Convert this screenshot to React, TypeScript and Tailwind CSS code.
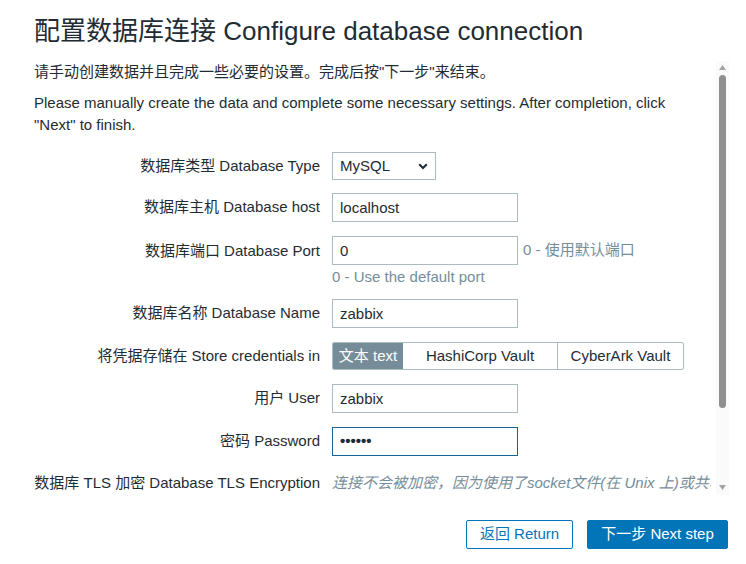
import React from "react";

const labelCls = "w-[286px] shrink-0 text-right whitespace-nowrap";
const inputCls =
  "h-[29px] w-[186px] border border-[#acbbc2] bg-white px-[7px] text-[15px] text-[#1f2c33] outline-none font-['Liberation_Sans','Noto_Sans_CJK_SC',sans-serif]";

function Row({ label, children, className = "" }: { label: string; children: React.ReactNode; className?: string }) {
  return (
    <div className={"flex items-center gap-[12px] " + className}>
      <div className={labelCls}>{label}</div>
      {children}
    </div>
  );
}

export default function App() {
  return (
    <div className="w-[746px] h-[564px] bg-white overflow-hidden text-[#1f2c33] text-[15px] font-['Liberation_Sans','Noto_Sans_CJK_SC',sans-serif]">
      <h1 className="pl-[34px] pt-[16px] text-[26px] leading-[30px] font-normal whitespace-nowrap">
        配置数据库连接 Configure database connection
      </h1>
      <div className="ml-[34px] mt-[15px] flex h-[434px] w-[695px]">
        <div className="mr-[5px] flex-1 overflow-hidden">
          <p className="leading-[22px] whitespace-nowrap">请手动创建数据并且完成一些必要的设置。完成后按"下一步"来结束。</p>
          <p className="mt-[9px] leading-[22px] w-[660px]">
            Please manually create the data and complete some necessary settings. After completion, click "Next" to finish.
          </p>
          <div className="mt-[16px] flex flex-col">
            <Row label="数据库类型 Database Type">
              <div className="flex h-[28px] w-[104px] items-center justify-between border border-[#acbbc2] pl-[7px] pr-[7px]">
                <span>MySQL</span>
                <svg width="10" height="7" viewBox="0 0 10 7">
                  <path d="M1.2 1.2 L5 5 L8.8 1.2" fill="none" stroke="#1f2c33" strokeWidth="2" />
                </svg>
              </div>
            </Row>
            <Row label="数据库主机 Database host" className="mt-[13px]">
              <input readOnly className={inputCls} value="localhost" />
            </Row>
            <div className="mt-[14px] flex gap-[12px]">
              <div className={labelCls + " h-[29px] leading-[29px]"}>数据库端口 Database Port</div>
              <div className="flex flex-col">
                <div className="flex items-center gap-[5px]">
                  <input readOnly className={inputCls} value="0" />
                  <span className="text-[#768d99] whitespace-nowrap">0 - 使用默认端口</span>
                </div>
                <div className="mt-[3px] leading-[18px] text-[#768d99]">0 - Use the default port</div>
              </div>
            </div>
            <Row label="数据库名称 Database Name" className="mt-[13px]">
              <input readOnly className={inputCls} value="zabbix" />
            </Row>
            <Row label="将凭据存储在 Store credentials in" className="mt-[14px]">
              <div className="flex h-[28px] rounded-[2px] border border-[#acbbc2] overflow-hidden">
                <div className="flex w-[70px] items-center justify-center bg-[#768d99] text-white">文本 text</div>
                <div className="flex w-[155px] items-center justify-center border-r border-[#acbbc2]">HashiCorp Vault</div>
                <div className="flex w-[125px] items-center justify-center">CyberArk Vault</div>
              </div>
            </Row>
            <Row label="用户 User" className="mt-[14px]">
              <input readOnly className={inputCls} value="zabbix" />
            </Row>
            <Row label="密码 Password" className="mt-[14px]">
              <div className="flex h-[29px] w-[186px] items-center border border-[#15629b] px-[7px]">
                <span className="text-[15px] font-bold text-[#1f2c33]">••••••</span>
              </div>
            </Row>
            <Row label="数据库 TLS 加密 Database TLS Encryption" className="mt-[13px] h-[28px]">
              <span className="whitespace-nowrap italic text-[#768d99]">
                连接不会被加密，因为使用了socket文件(在 Unix 上)或共享内存(Windows)。
              </span>
            </Row>
          </div>
        </div>
        <div className="relative w-[13px] shrink-0 bg-[#fafafa]">
          <svg className="absolute left-[3px] top-[4px]" width="7" height="5" viewBox="0 0 7 5">
            <path d="M3.5 0 L7 5 L0 5 Z" fill="#a3a3a3" />
          </svg>
          <div className="absolute left-[3px] top-[14px] h-[333px] w-[7px] rounded-full bg-[#8f8f8f]" />
          <svg className="absolute left-[3px] bottom-[5px]" width="7" height="5" viewBox="0 0 7 5">
            <path d="M0 0 L7 0 L3.5 5 Z" fill="#a3a3a3" />
          </svg>
        </div>
      </div>
      <div className="mt-[25px] flex justify-end gap-[14px] pr-[18px]">
        <button className="h-[29px] w-[107px] rounded-[2px] border border-[#0275b8] bg-white text-[15px] text-[#0275b8]">
          返回 Return
        </button>
        <button className="h-[29px] w-[141px] rounded-[2px] border border-[#0275b8] bg-[#0275b8] text-[15px] text-white">
          下一步 Next step
        </button>
      </div>
    </div>
  );
}
